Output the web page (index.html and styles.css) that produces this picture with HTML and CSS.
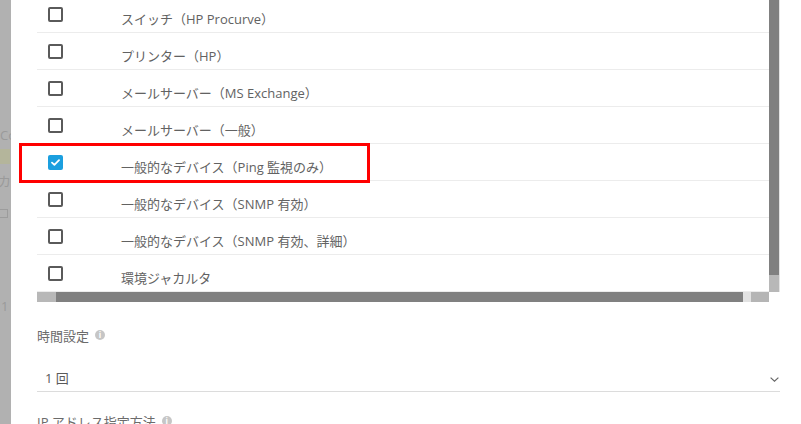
FILE: index.html
```html
<!DOCTYPE html>
<html lang="ja">

<head>
    <meta charset="UTF-8">
    <meta name="viewport" content="width=device-width, initial-scale=1.0">
    <title>デバイスの種類</title>

    <link rel="stylesheet" href="styles.css">
</head>

<body>
    <div class="backdrop">
        <span class="fadeText fadeCo">Co</span>
        <span class="fadeBox"></span>
        <span class="fadeText fadeKa">カ</span>
        <span class="fadeCheck"></span>
        <span class="fadeText fadeOne">1</span>
    </div>

    <main class="modal">
        <div class="tableWrap">
            <div class="tableView">
                <div class="rows">
                    <div class="row">
                        <span class="check"></span>
                        <span class="name">スイッチ（HP Procurve）</span>
                    </div>
                    <div class="row">
                        <span class="check"></span>
                        <span class="name">プリンター（HP）</span>
                    </div>
                    <div class="row">
                        <span class="check"></span>
                        <span class="name">メールサーバー（MS Exchange）</span>
                    </div>
                    <div class="row">
                        <span class="check"></span>
                        <span class="name">メールサーバー（一般）</span>
                    </div>
                    <div class="row selected">
                        <span class="check checked">
                            <svg width="9" height="7" viewBox="0 0 9 7"><path d="M1 3.6 L3.4 5.8 L8 1.2" fill="none" stroke="#fff" stroke-width="1.8" stroke-linecap="round" stroke-linejoin="round"/></svg>
                        </span>
                        <span class="name">一般的なデバイス（Ping 監視のみ）</span>
                        <span class="highlight"></span>
                    </div>
                    <div class="row">
                        <span class="check"></span>
                        <span class="name">一般的なデバイス（SNMP 有効）</span>
                    </div>
                    <div class="row">
                        <span class="check"></span>
                        <span class="name">一般的なデバイス（SNMP 有効、詳細）</span>
                    </div>
                    <div class="row">
                        <span class="check"></span>
                        <span class="name">環境ジャカルタ</span>
                    </div>
                </div>
                <div class="vScroll">
                    <div class="vThumb"></div>
                    <div class="vTrack"></div>
                </div>
            </div>
            <div class="hScroll">
                <div class="hTrackStart"></div>
                <div class="hThumb"></div>
                <div class="hGap"></div>
                <div class="hTrackEnd"></div>
                <div class="corner"></div>
            </div>
        </div>

        <div class="field">
            <div class="label">時間設定 <span class="info">i</span></div>
            <div class="select">
                <span>1 回</span>
                <svg width="9" height="5" viewBox="0 0 9 5"><path d="M0.6 0.6 L4.5 4.2 L8.4 0.6" fill="none" stroke="#666" stroke-width="1.2"/></svg>
            </div>
        </div>

        <div class="field next">
            <div class="label">IP アドレス指定方法 <span class="info">i</span></div>
        </div>
    </main>
</body>

</html>
```

FILE: styles.css
```css
body {
    font-family: "Open Sans", "Noto Sans CJK JP", sans-serif;
    font-size: 13px;
    color: #626262;
    margin: 0px;
    height: 424px;
    overflow: hidden;
    display: flex;
    background-color: #ffffff;
}

.backdrop {
    width: 11px;
    flex-shrink: 0;
    background-color: #b1b1b1;
    display: flex;
    flex-direction: column;
    overflow: hidden;
}

.fadeText {
    color: #9a9a9a;
    font-size: 13px;
    line-height: 16px;
    white-space: nowrap;
}

.fadeCo {
    margin-top: 127px;
}

.fadeBox {
    width: 10px;
    height: 15px;
    margin-top: 6px;
    background-color: #b4b59b;
}

.fadeKa {
    margin-top: 9px;
    margin-left: -2px;
}

.fadeCheck {
    width: 7px;
    height: 7px;
    margin-top: 20px;
    border: 1px solid #9c9c9c;
    border-left: none;
}

.fadeOne {
    margin-top: 80px;
    margin-left: 1px;
}

.modal {
    flex: 1;
    padding: 0px 21px 0px 26px;
    display: flex;
    flex-direction: column;
}

.tableWrap {
    display: flex;
    flex-direction: column;
    margin-top: -4px;
}

.tableView {
    display: flex;
}

.rows {
    flex: 1;
}

.row {
    position: relative;
    height: 36px;
    border-bottom: 1px solid #ececec;
    display: flex;
    align-items: flex-start;
}

.check {
    width: 15px;
    height: 15px;
    box-sizing: border-box;
    border: 2px solid #5a5a5a;
    border-radius: 2px;
    margin: 11px 0px 0px 11px;
    display: flex;
    align-items: center;
    justify-content: center;
}

.check.checked {
    border: none;
    background-color: #1b9fdf;
}

.name {
    margin: 15px 0px 0px 58px;
    line-height: 17px;
    white-space: nowrap;
}

.highlight {
    position: absolute;
    left: -18px;
    top: -1px;
    width: 351px;
    height: 40px;
    box-sizing: border-box;
    border: 3px solid #ff0000;
}

.vScroll {
    width: 10px;
    display: flex;
    flex-direction: column;
    border-right: 1px solid #e4e4e4;
}

.vThumb {
    flex: 1;
    background-color: #808080;
}

.vTrack {
    height: 17px;
    background-color: #b8b8b8;
}

.hScroll {
    height: 10px;
    display: flex;
}

.hTrackStart {
    width: 19px;
    background-color: #b8b8b8;
}

.hThumb {
    flex: 1;
    background-color: #808080;
}

.hGap {
    width: 8px;
    background-color: #e2e2e2;
}

.hTrackEnd {
    width: 18px;
    background-color: #b5b5b5;
}

.corner {
    width: 11px;
}

.field {
    display: flex;
    flex-direction: column;
    margin-top: 26px;
}

.field.next {
    margin-top: 22px;
}

.label {
    line-height: 17px;
    color: #6b6b6b;
    display: flex;
    align-items: center;
    gap: 6px;
}

.info {
    width: 10px;
    height: 10px;
    border-radius: 50%;
    background-color: #c6c6c6;
    color: #ffffff;
    font-size: 8px;
    font-weight: bold;
    line-height: 10px;
    text-align: center;
    margin-top: -3px;
}

.select {
    margin-top: 18px;
    height: 29px;
    padding: 7px 1px 0px 8px;
    box-sizing: border-box;
    border-bottom: 1px solid #dcdcdc;
    display: flex;
    justify-content: space-between;
    align-items: flex-start;
    line-height: 17px;
    color: #5a5a5a;
}

.select svg {
    margin-top: 7px;
}
```
